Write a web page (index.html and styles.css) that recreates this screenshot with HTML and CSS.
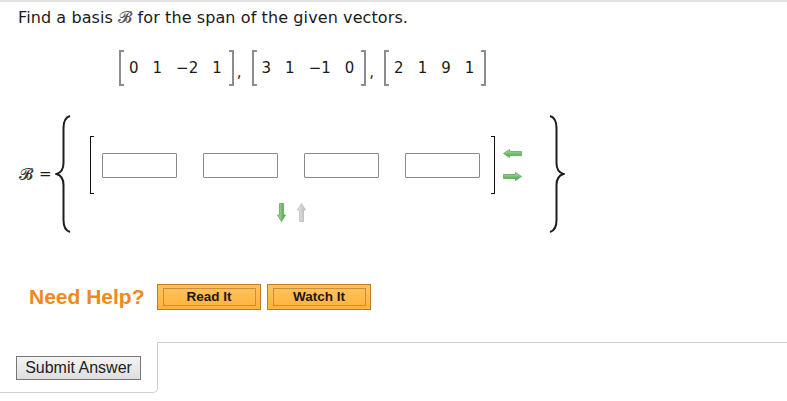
FILE: index.html
```html
<!DOCTYPE html>
<html>
<head>
<meta charset="utf-8">
<link rel="stylesheet" href="styles.css">
</head>
<body>
<div class="topline"></div>
<div class="q">
  <p class="title">Find a basis <span class="cal">𝓑</span> for the span of the given vectors.</p>
  <div class="vecs">
    <span class="vec"><span class="br bl"></span><span class="ents"><span>0</span><span>1</span><span>−2</span><span>1</span></span><span class="br brr"></span></span><span class="comma">,</span>
    <span class="vec"><span class="br bl"></span><span class="ents"><span>3</span><span>1</span><span>−1</span><span>0</span></span><span class="br brr"></span></span><span class="comma">,</span>
    <span class="vec"><span class="br bl"></span><span class="ents"><span>2</span><span>1</span><span>9</span><span>1</span></span><span class="br brr"></span></span>
  </div>
  <div class="basis">
    <span class="lhs"><span class="cal">𝓑</span><span class="eq">=</span></span>
    <svg class="brace" width="16" height="118" viewBox="0 0 16 118"><path d="M15,1 C10,2.5 8.5,7 8.5,13 L8.5,48 C8.5,54 6.5,57.5 1.5,59 C6.5,60.5 8.5,64 8.5,70 L8.5,105 C8.5,111 10,115.5 15,117" fill="none" stroke="#1e1e1e" stroke-width="2"/></svg>
    <div class="block">
      <div class="matrow">
        <span class="mbr ml"></span>
        <span class="cell"></span><span class="cell"></span><span class="cell"></span><span class="cell"></span>
        <span class="mbr mr"></span>
        <span class="lr">
          <svg width="19" height="9" viewBox="0 0 19 9"><defs><linearGradient id="g1" x1="0" y1="0" x2="0" y2="1"><stop offset="0" stop-color="#b5e3ad"/><stop offset="1" stop-color="#3f9a3c"/></linearGradient></defs><path d="M0.5,4.5 L6.5,0.5 L6.5,2.5 L18.5,2.5 L18.5,6.5 L6.5,6.5 L6.5,8.5 Z" fill="url(#g1)" stroke="#5aa956" stroke-width="0.8"/></svg>
          <svg width="19" height="9" viewBox="0 0 19 9"><path d="M18.5,4.5 L12.5,0.5 L12.5,2.5 L0.5,2.5 L0.5,6.5 L12.5,6.5 L12.5,8.5 Z" fill="url(#g1)" stroke="#5aa956" stroke-width="0.8"/></svg>
        </span>
      </div>
      <div class="ud">
        <svg width="9" height="19" viewBox="0 0 9 19"><defs><linearGradient id="g2" x1="0" y1="0" x2="1" y2="0"><stop offset="0" stop-color="#b5e3ad"/><stop offset="1" stop-color="#3f9a3c"/></linearGradient><linearGradient id="g3" x1="0" y1="0" x2="1" y2="0"><stop offset="0" stop-color="#eeeeee"/><stop offset="1" stop-color="#b4b4b4"/></linearGradient></defs><path d="M2.5,0.5 L6.5,0.5 L6.5,12 L8.5,12 L4.5,18.5 L0.5,12 L2.5,12 Z" fill="url(#g2)" stroke="#5aa956" stroke-width="0.8"/></svg>
        <svg width="9" height="19" viewBox="0 0 9 19"><path d="M2.5,18.5 L6.5,18.5 L6.5,7 L8.5,7 L4.5,0.5 L0.5,7 L2.5,7 Z" fill="url(#g3)" stroke="#bdbdbd" stroke-width="0.8"/></svg>
      </div>
    </div>
    <svg class="brace rb" width="16" height="118" viewBox="0 0 16 118"><path d="M1,1 C6,2.5 7.5,7 7.5,13 L7.5,48 C7.5,54 9.5,57.5 14.5,59 C9.5,60.5 7.5,64 7.5,70 L7.5,105 C7.5,111 6,115.5 1,117" fill="none" stroke="#1e1e1e" stroke-width="2"/></svg>
  </div>
  <div class="help">
    <span class="needhelp">Need Help?</span>
    <span class="hbtn"><span>Read It</span></span>
    <span class="hbtn"><span>Watch It</span></span>
  </div>
</div>
<div class="submitbar">
  <div class="submitcell"><button class="submit">Submit Answer</button></div>
  <div class="rest"></div>
</div>
</body>
</html>
```
FILE: styles.css
```css
body {
  margin: 0;
  background: #fff;
  font-family: "DejaVu Sans", Verdana, sans-serif;
  color: #1a1a1a;
}
.topline {
  height: 2px;
  background: #e2e2e2;
}
.q {
  padding-left: 18px;
}
.title {
  margin: 6px 0 0 0;
  font-size: 16px;
  line-height: 20px;
  letter-spacing: 0.1px;
}
.cal {
  font-family: "DejaVu Serif", "DejaVu Sans", "Noto Sans", serif;
  font-style: normal;
  color: #555;
}
.vecs {
  margin-top: 22px;
  margin-left: 101px;
  display: flex;
  align-items: center;
  height: 36px;
  font-size: 15px;
}
.vec {
  display: inline-flex;
  align-items: center;
  height: 36px;
}
.br {
  box-sizing: border-box;
  width: 5px;
  height: 36px;
  border: 2px solid #8c8c8c;
}
.bl { border-right: none; }
.brr { border-left: none; }
.ents {
  display: inline-flex;
  gap: 14px;
  padding: 0 7px 0 5px;
}
.comma {
  margin: 8px 10px 0 3px;
}
.basis {
  margin-top: 29px;
  display: flex;
  align-items: flex-start;
  height: 118px;
}
.lhs {
  align-self: center;
  display: inline-flex;
  align-items: center;
  gap: 6px;
  margin-left: 1px;
  font-size: 16px;
}
.lhs .cal { color: #333; }
.eq { font-size: 15px; }
.brace { margin-left: 3px; }
.block {
  display: flex;
  flex-direction: column;
  align-items: center;
  padding-top: 21px;
  margin-left: 19px;
}
.matrow {
  display: flex;
  align-items: center;
  height: 58px;
}
.mbr {
  box-sizing: border-box;
  width: 4px;
  height: 58px;
  border: 1.5px solid #111;
}
.ml { border-right: none; margin-right: 8px; }
.mr { border-left: none; margin-left: 11px; }
.cell {
  box-sizing: border-box;
  width: 75px;
  height: 25px;
  border: 1px solid #8a8a8a;
  border-radius: 1px;
  background: #fff;
}
.cell + .cell { margin-left: 26px; }
.lr {
  display: flex;
  flex-direction: column;
  gap: 14px;
  margin-left: 8px;
}
.lr svg { display: block; }
.ud {
  display: flex;
  gap: 11px;
  margin-top: 9px;
  margin-right: 28px;
}
.ud svg { display: block; }
.rb { margin-left: 27px; }
.help {
  margin-top: 51px;
  margin-left: 11px;
  display: flex;
  align-items: center;
  height: 26px;
}
.needhelp {
  font-family: "Liberation Sans", Arial, sans-serif;
  font-weight: bold;
  font-size: 21px;
  color: #f0891c;
  margin-right: 12px;
}
.hbtn {
  box-sizing: border-box;
  width: 104px;
  height: 26px;
  border: 1px solid #c07a2c;
  background: linear-gradient(#fec45c, #fdb23c);
  padding: 3px 4px 3px 5px;
  margin-right: 6px;
}
.hbtn span {
  display: block;
  box-sizing: border-box;
  height: 100%;
  border: 1px solid #cf8d3c;
  font-family: "Liberation Sans", Arial, sans-serif;
  font-weight: bold;
  font-size: 13.5px;
  line-height: 16px;
  text-align: center;
  color: #1a1a1a;
}
.submitbar {
  margin-top: 32px;
  display: flex;
}
.submitcell {
  box-sizing: border-box;
  width: 158px;
  height: 51px;
  border-right: 1px solid #cfcfcf;
  border-bottom: 1px solid #cfcfcf;
  border-bottom-right-radius: 5px;
  padding: 14px 0 0 16px;
}
.rest {
  flex: 1;
  border-top: 1px solid #cfcfcf;
}
.submit {
  box-sizing: border-box;
  width: 125px;
  height: 24px;
  padding: 0;
  border: 1px solid #777;
  background: linear-gradient(#f4f4f4, #dedede);
  font-family: "Liberation Sans", Arial, sans-serif;
  font-size: 16px;
  color: #222;
  border-radius: 0;
}
```
